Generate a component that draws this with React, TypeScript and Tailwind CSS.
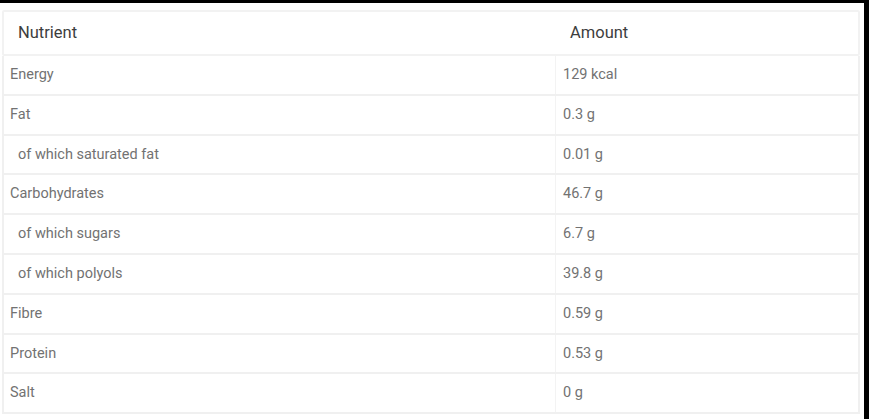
const rows: { name: string; amount: string; sub?: boolean }[] = [
  { name: "Energy", amount: "129 kcal" },
  { name: "Fat", amount: "0.3 g" },
  { name: "of which saturated fat", amount: "0.01 g", sub: true },
  { name: "Carbohydrates", amount: "46.7 g" },
  { name: "of which sugars", amount: "6.7 g", sub: true },
  { name: "of which polyols", amount: "39.8 g", sub: true },
  { name: "Fibre", amount: "0.59 g" },
  { name: "Protein", amount: "0.53 g" },
  { name: "Salt", amount: "0 g" },
];

export default function App() {
  return (
    <div className="h-[419px] w-[869px] overflow-hidden border-t-[3px] border-r-[5px] border-black bg-white font-['Roboto',sans-serif]">
      <div className="ml-[2px] mt-[7px] w-[858px]">
        <div className="grid h-[46px] grid-cols-[551px_1fr] items-center rounded-[2px] border-[2px] border-[#f2f2f2] text-[16.5px] text-[#3d3d3d]">
          <div className="pl-[14px]">Nutrient</div>
          <div className="pl-[15px]">Amount</div>
        </div>
        {rows.map((r) => (
          <div
            key={r.name}
            className="grid h-[39.8px] grid-cols-[551px_1fr] border-x-[2px] border-b-[2px] border-[#f0f0f0] text-[14.5px] text-[#727272]"
          >
            <div className={`flex items-center ${r.sub ? "pl-[14px]" : "pl-[6px]"}`}>{r.name}</div>
            <div className="flex items-center border-l border-[#f3f3f3] pl-[7px]">{r.amount}</div>
          </div>
        ))}
      </div>
    </div>
  );
}
